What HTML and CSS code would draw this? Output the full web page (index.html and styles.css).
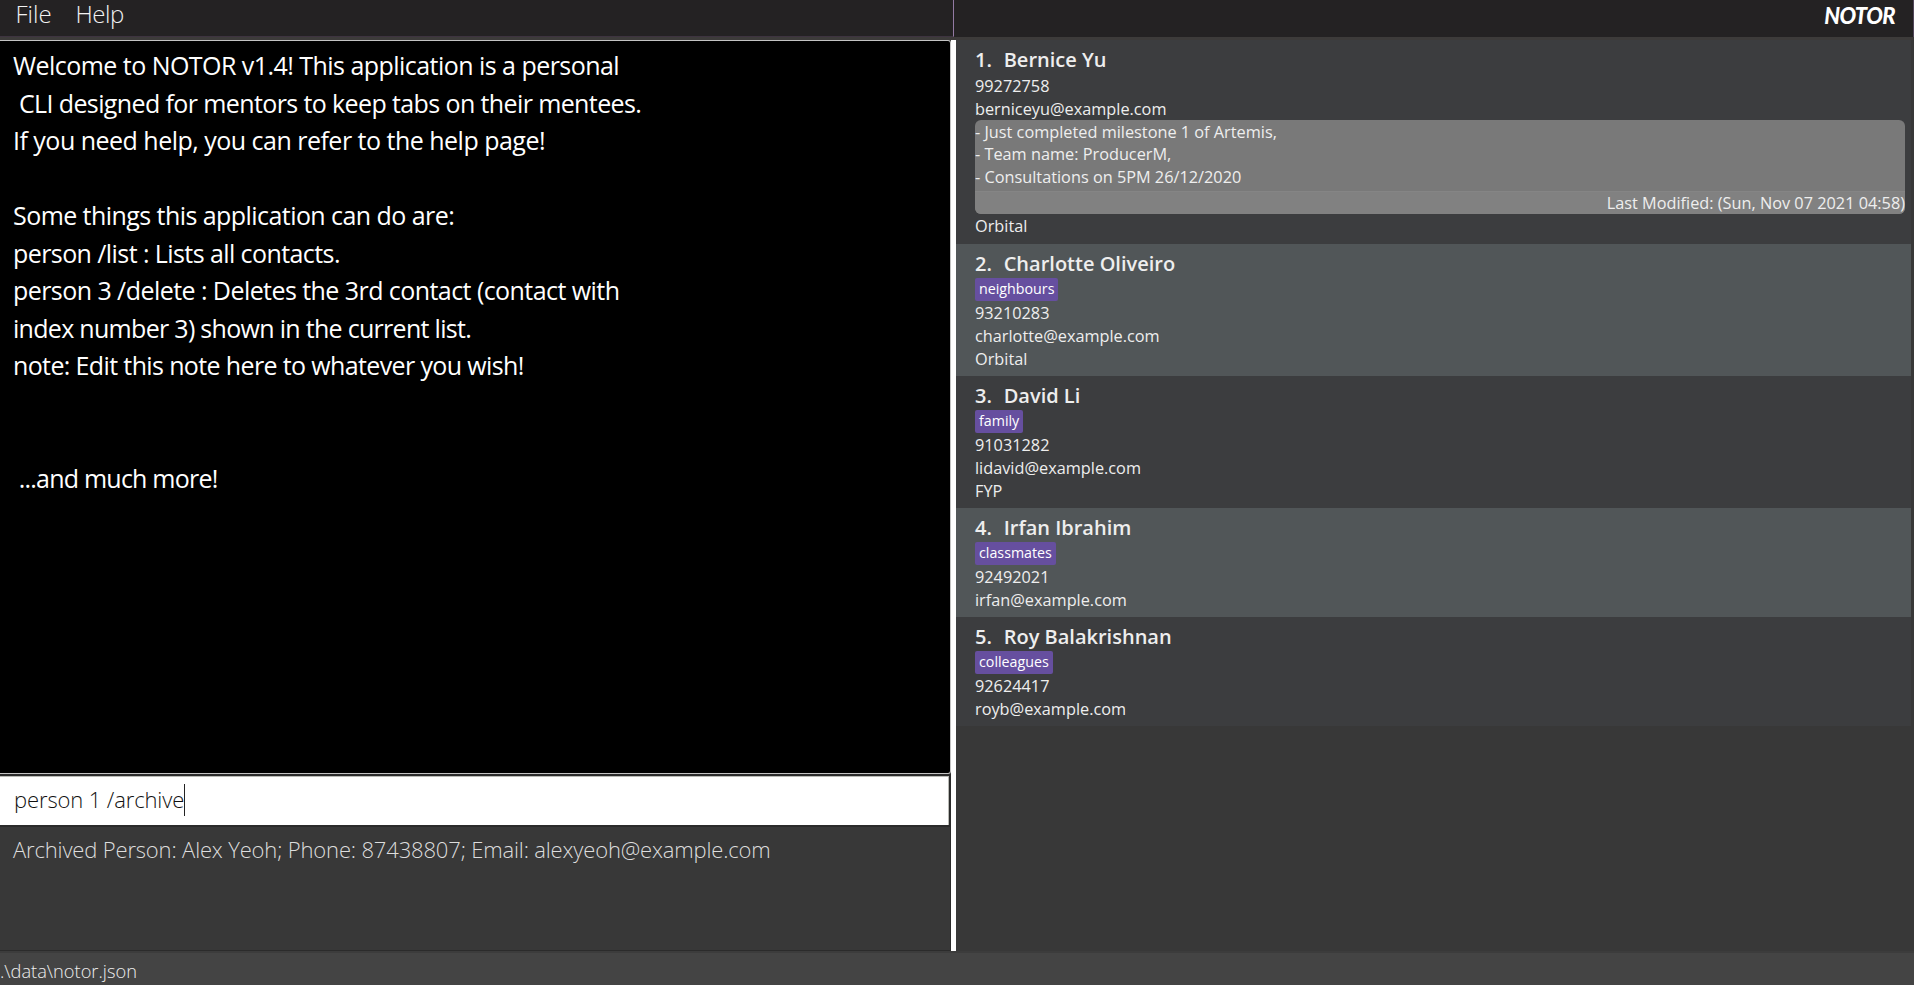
FILE: index.html
```html
<!DOCTYPE html>
<html lang="en">
<head>
<meta charset="utf-8">
<title>NOTOR</title>
<link rel="stylesheet" href="styles.css">
</head>
<body>
<div class="app">
  <header class="menubar">
    <nav class="menus"><span class="menu">File</span><span class="menu menu-help">Help</span></nav>
    <div class="brandbar"><span class="brand">NOTOR</span></div>
  </header>
  <main class="split">
    <section class="left">
      <div class="note-area"><span class="l1">Welcome to NOTOR v1.4! This application is a personal</span>
<span class="l2"> CLI designed for mentors to keep tabs on their mentees.</span>
<span class="l3">If you need help, you can refer to the help page!</span>

<span class="l4">Some things this application can do are:</span>
<span class="l5">person /list : Lists all contacts.</span>
<span class="l6">person 3 /delete : Deletes the 3rd contact (contact with</span>
<span class="l7">index number 3) shown in the current list.</span>
<span class="l8">note: Edit this note here to whatever you wish!</span>


<span class="l9"> ...and much more!</span></div>
      <div class="command"><span class="command-text">person 1 /archive</span><i class="caret"></i></div>
      <div class="result"><span class="result-text">Archived Person: Alex Yeoh; Phone: 87438807; Email: alexyeoh@example.com</span></div>
    </section>
    <div class="divider"></div>
    <section class="people">
      <article class="person first">
        <h2><span class="idx">1.</span><span class="name">Bernice Yu</span></h2>
        <p>99272758</p><p>berniceyu@example.com</p>
        <div class="note">
          <div class="note-body">- Just completed milestone 1 of Artemis,
- Team name: ProducerM,
- Consultations on 5PM 26/12/2020</div>
          <div class="note-date">Last Modified: (Sun, Nov 07 2021 04:58)</div>
        </div>
        <p>Orbital</p>
      </article>
      <article class="person alt">
        <h2><span class="idx">2.</span><span class="name">Charlotte Oliveiro</span></h2>
        <div class="tags"><span class="tag">neighbours</span></div>
        <p>93210283</p><p>charlotte@example.com</p><p>Orbital</p>
      </article>
      <article class="person">
        <h2><span class="idx">3.</span><span class="name">David Li</span></h2>
        <div class="tags"><span class="tag">family</span></div>
        <p>91031282</p><p>lidavid@example.com</p><p>FYP</p>
      </article>
      <article class="person alt">
        <h2><span class="idx">4.</span><span class="name">Irfan Ibrahim</span></h2>
        <div class="tags"><span class="tag">classmates</span></div>
        <p>92492021</p><p>irfan@example.com</p>
      </article>
      <article class="person">
        <h2><span class="idx">5.</span><span class="name">Roy Balakrishnan</span></h2>
        <div class="tags"><span class="tag">colleagues</span></div>
        <p>92624417</p><p>royb@example.com</p>
      </article>
    </section>
  </main>
  <footer class="status"><span class="path">.\data\notor.json</span></footer>
</div>
</body>
</html>
```
FILE: styles.css
```css
* { box-sizing: border-box; }
body {
  margin: 0;
  background: #383838;
  font-family: "Open Sans", "Noto Sans", sans-serif;
  color: #eee;
}
.app {
  display: flex;
  flex-direction: column;
  width: 1914px;
  height: 985px;
  overflow: hidden;
}
.menubar {
  display: flex;
  height: 40px;
  background: #242223;
  border-bottom: 3px solid #3d3b3a;
}
.menus {
  display: flex;
  width: 954px;
  padding-left: 15.5px;
  gap: 24px;
  border-right: 1px solid #937aa3;
  border-bottom: 1px solid #3e3440;
  font-size: 24px;
  font-weight: 300;
  line-height: 27px;
  color: #f2f2f2;
}
.menu-help { letter-spacing: -0.5px; }
.brandbar {
  flex: 1;
  display: flex;
  justify-content: flex-end;
  padding-right: 18px;
  border-right: 1px solid #51465a;
}
.brand {
  font: italic 900 22px/31px Lato, sans-serif;
  letter-spacing: -0.6px;
  color: #fff;
}
.split { display: flex; height: 911px; }
.left { display: flex; flex-direction: column; width: 951px; }
.note-area {
  height: 734px;
  padding: 6px 13px 0;
  background: #000;
  border: 1px solid #c4c4c4;
  border-left: 0;
  border-radius: 0 3px 3px 0;
  color: #fff;
  font-size: 25px;
  line-height: 37.5px;
  white-space: pre;
}
.l1 { letter-spacing: -0.54px; }
.l2 { letter-spacing: -0.61px; }
.l3 { letter-spacing: -0.51px; }
.l4 { letter-spacing: -0.56px; }
.l5 { letter-spacing: -0.58px; }
.l6 { letter-spacing: -0.56px; }
.l7 { letter-spacing: -0.7px; }
.l8 { letter-spacing: -0.63px; }
.l9 { letter-spacing: -0.78px; }
.command {
  display: flex;
  align-items: center;
  height: 53px;
  padding: 0 0 2px 14px;
  background: #fff;
  border: solid #2b2b2b;
  border-width: 2px 2px 2px 0;
  box-shadow: inset -1px 1px #b9bab5;
  color: #111;
  font-size: 22px;
  font-weight: 300;
  letter-spacing: -0.12px;
}
.command-text { padding-bottom: 2px; }
.caret { width: 1px; height: 32px; background: #222; }
.result {
  flex: 1;
  padding: 8px 13px;
  border: solid #2b2b2b;
  border-width: 0 1px 1px 0;
  color: #ddd;
  font-size: 22px;
  font-weight: 300;
  line-height: 28px;
  letter-spacing: -0.16px;
}
.divider { width: 5px; background: #fff; }
.people { flex: 1; border-right: 3px solid #383838; }
.person { padding: 10px 6px 6px 19px; background: #3c3d3f; }
.person.first { padding-bottom: 7px; }
.person.alt { background: #515658; }
.person h2 {
  display: flex;
  margin: 0;
  height: 24px;
  font-size: 20px;
  font-weight: 600;
  line-height: 20px;
}
.idx { width: 28.7px; }
.person p { margin: 0; height: 23px; font-size: 16.3px; line-height: 25px; }
.tags { display: flex; height: 23px; }
.tag {
  padding: 0 4px;
  border-radius: 2px;
  background: #664f9f;
  color: #fff;
  font-size: 14.25px;
  line-height: 21px;
}
.note {
  height: 94px;
  overflow: hidden;
  border-radius: 6px;
  background: #797979;
  font-size: 16.3px;
  line-height: 22.6px;
}
.note-body { height: 71px; padding-top: 0.8px; white-space: pre; }
.note-date {
  height: 23px;
  border-top: 1px solid #858585;
  background: #818181;
  text-align: right;
}
.status {
  flex: 1;
  padding-top: 6px;
  background: #444;
  border-top: 2px solid #3c3c3c;
  font-size: 18.25px;
  font-weight: 300;
  line-height: 24px;
}
```
